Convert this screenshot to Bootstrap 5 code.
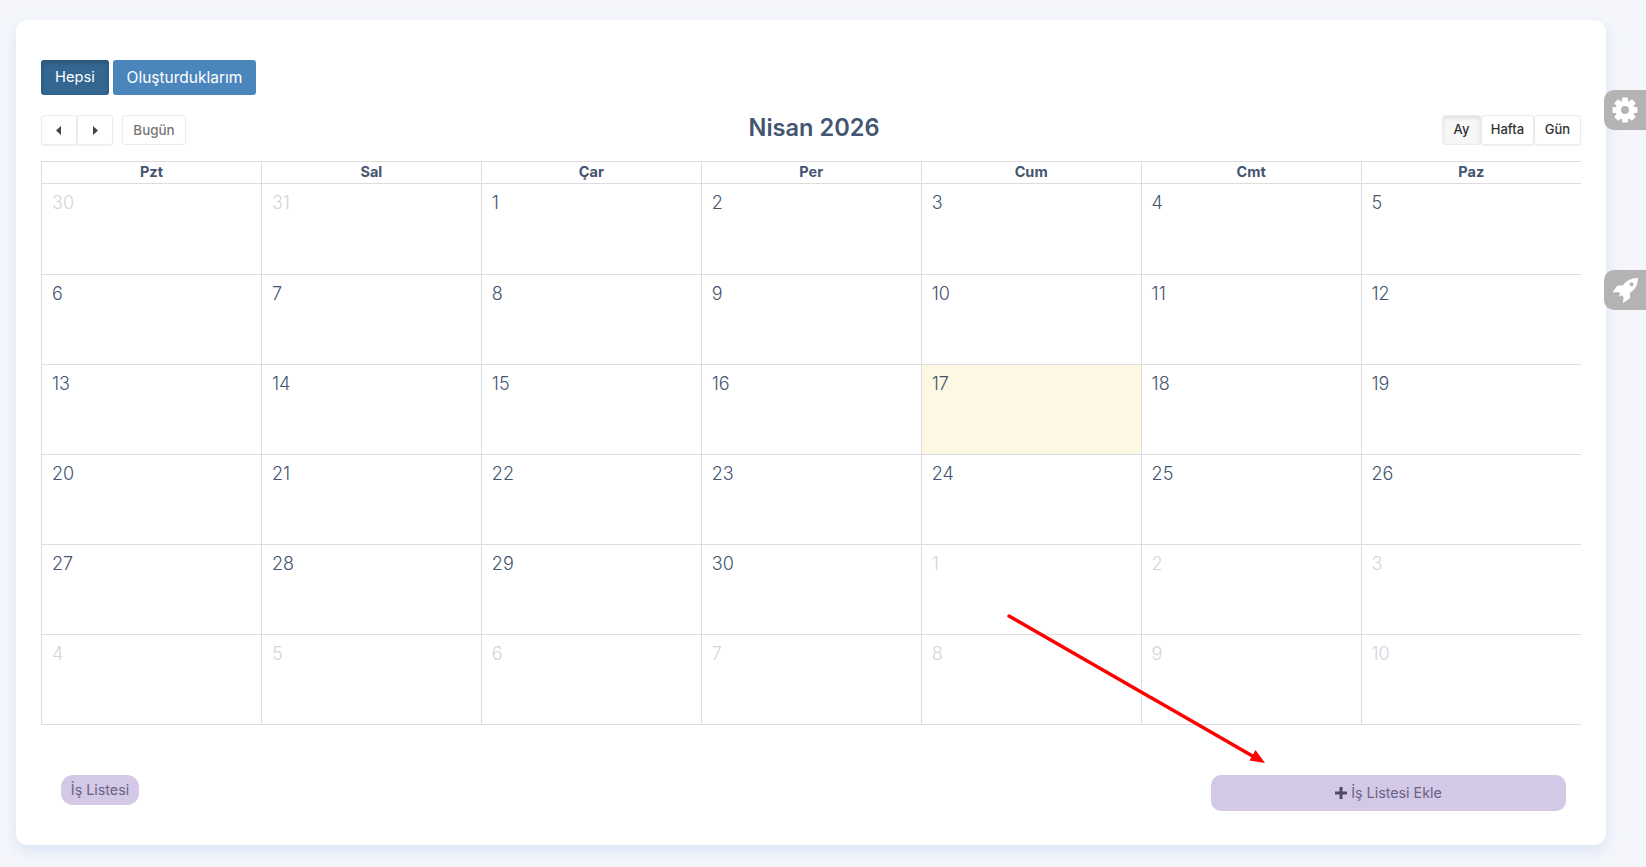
<!DOCTYPE html>
<html lang="tr">
<head>
  <meta charset="UTF-8" />
  <meta name="viewport" content="width=device-width, initial-scale=1.0"/>
  <title>Takvim</title>
  <link href="https://cdn.jsdelivr.net/npm/bootstrap@5.3.3/dist/css/bootstrap.min.css" rel="stylesheet" />
  <style>
    body {
      background: #f4f6fb;
      font-family: "Inter", "Liberation Sans", sans-serif;
      color: #435570;
      height: 867px;
      overflow: hidden;
    }

    .page-panel {
      position: relative;
      margin: 20px 40px 0 16px;
      height: 825px;
      padding: 40px 25px 0;
      background: #fff;
      border-radius: 12px;
      box-shadow: 0 6px 14px rgba(180, 200, 235, .4);
    }

    .btn-hepsi, .btn-mine {
      height: 35px;
      padding: 0;
      line-height: 33px;
      color: #fff;
      border: 0;
      border-radius: 3px;
    }

    .btn-hepsi { width: 68px; font-size: 14.700px; background: #336690; box-shadow: inset 0 2px 5px rgba(0, 0, 0, .2); }
    .btn-mine { width: 143px; font-size: 15.500px; background: #4a86bb; margin-left: 4px; }
    .btn-hepsi:hover { background: #336690; color: #fff; }
    .btn-mine:hover { background: #4a86bb; color: #fff; }

    .cal-toolbar { margin-top: 20px; margin-bottom: 16px; height: 30px; }

    .cal-btn {
      height: 30px;
      padding: 0;
      font-size: 13px;
      font-weight: 500;
      color: #333;
      background: #fff;
      border: 1px solid #ececec;
      border-radius: 3px;
      box-shadow: 0 1px 2px rgba(0, 0, 0, .06);
    }

    .cal-nav { width: 36px; display: inline-flex; align-items: center; justify-content: center; }
    .cal-today { width: 64px; margin-left: 9px; font-size: 13.400px; color: #777; box-shadow: none; }
    .cal-ay { width: 39px; background: #f7f7f7; box-shadow: inset 0 2px 4px rgba(0, 0, 0, .1); }
    .cal-hafta { width: 53px; }
    .cal-gun { width: 47px; }

    .cal-title { font-size: 23.600px; font-weight: 600; margin: -1px 0 0; color: #435570; }

    .cal-table { table-layout: fixed; width: 1540px; margin: 0; border-collapse: collapse; }
    .cal-table th, .cal-table td { border: 1px solid #ddd; padding: 0; color: #435570; }
    .cal-table tr > :last-child { border-right: 0; }
    .cal-table th { height: 21.500px; font-size: 14.500px; font-weight: 700; text-align: center; line-height: 20px; }
    .cal-table td { height: 90px; vertical-align: top; padding: 8px 10px 0; font-size: 18px; font-weight: 300; line-height: 22px; }
    .cal-table tbody tr:first-child td { height: 91px; }
    .cal-table td.other { color: #d2d5da; }
    .cal-table td.today { background: #fdf8e3; }

    .cal-footer { margin-top: 50px; }

    .btn-liste, .btn-ekle {
      padding: 0;
      font-size: 14.300px;
      color: #6a6285;
      background: #d3c8e6;
      border: 0;
    }

    .btn-liste { width: 78px; height: 30px; margin-left: 20px; border-radius: 12px; }
    .btn-ekle { width: 355px; height: 36px; margin-right: 15px; border-radius: 10px; }
    .btn-liste:hover, .btn-ekle:hover { background: #d3c8e6; color: #6a6285; }

    .plus-icon { width: 12px; height: 12px; vertical-align: -1px; margin-right: 4px; fill: #4e4a68; }

    .side-tab {
      position: fixed;
      right: 0;
      width: 42px;
      height: 40px;
      background: #b3b3b3;
      border-radius: 10px 0 0 10px;
    }

    .side-tab svg { width: 26px; height: 26px; fill: #fff; }
    .tab-gear { top: 90px; }
    .tab-rocket { top: 270px; }

    .red-arrow { position: fixed; left: 0; top: 0; width: 1646px; height: 867px; pointer-events: none; }
  </style>
</head>
<body>
  <div class="page-panel">
    <div class="d-flex">
      <button class="btn btn-hepsi" type="button">Hepsi</button>
      <button class="btn btn-mine" type="button">Oluşturduklarım</button>
    </div>

    <!-- Calendar toolbar -->
    <div class="cal-toolbar d-flex justify-content-between align-items-start">
      <div class="d-flex">
        <button class="btn cal-btn cal-nav" type="button" aria-label="Önceki">
          <svg width="6" height="9" viewBox="0 0 6 9"><path d="M5 0v9L0 4.500z" fill="#444"/></svg>
        </button>
        <button class="btn cal-btn cal-nav" type="button" aria-label="Sonraki">
          <svg width="6" height="9" viewBox="0 0 6 9"><path d="M1 0v9l5-4.500z" fill="#444"/></svg>
        </button>
        <button class="btn cal-btn cal-today" type="button">Bugün</button>
      </div>
      <h2 class="cal-title">Nisan 2026</h2>
      <div class="d-flex">
        <button class="btn cal-btn cal-ay" type="button">Ay</button>
        <button class="btn cal-btn cal-hafta" type="button">Hafta</button>
        <button class="btn cal-btn cal-gun" type="button">Gün</button>
      </div>
    </div>

    <table class="cal-table">
      <thead>
        <tr><th>Pzt</th><th>Sal</th><th>Çar</th><th>Per</th><th>Cum</th><th>Cmt</th><th>Paz</th></tr>
      </thead>
      <tbody id="calBody"></tbody>
    </table>

    <div class="cal-footer d-flex justify-content-between align-items-start">
      <button class="btn btn-liste" type="button">İş Listesi</button>
      <button class="btn btn-ekle" type="button">
        <svg class="plus-icon" viewBox="0 0 12 12"><path d="M4.500 0h3v4.500H12v3H7.500V12h-3V7.500H0v-3h4.500z"/></svg>İş Listesi Ekle
      </button>
    </div>
  </div>

  <div class="side-tab tab-gear d-flex align-items-center justify-content-center">
    <svg viewBox="0 0 26 26">
      <circle cx="13" cy="13" r="9.500"/>
      <rect x="10" y="0.500" width="6" height="25" rx="1"/>
      <rect x="10" y="0.500" width="6" height="25" rx="1" transform="rotate(45 13 13)"/>
      <rect x="10" y="0.500" width="6" height="25" rx="1" transform="rotate(90 13 13)"/>
      <rect x="10" y="0.500" width="6" height="25" rx="1" transform="rotate(135 13 13)"/>
      <circle cx="13" cy="13" r="4" fill="#b3b3b3"/>
    </svg>
  </div>
  <div class="side-tab tab-rocket d-flex align-items-center justify-content-center">
    <svg viewBox="0 0 26 26">
      <path fill-rule="evenodd" d="M26 1C20 1 14.500 3 11 8.500H6.500C5.500 8.500 4.800 9 4.300 10L.500 15.500l6-.500 1.800 2-1.500 1.500 1.200 1.200 1.500-1.500 2 1.800-.500 6 5.500-3.800c1-.500 1.500-1.200 1.500-2.200V16c5.500-3.500 8-9 8-15zM19.500 5.200a2 2 0 1 1 0 4 2 2 0 0 1 0-4z"/>
    </svg>
  </div>

  <!-- Red annotation arrow -->
  <svg class="red-arrow" viewBox="0 0 1646 867">
    <line x1="1009" y1="616" x2="1256" y2="758" stroke="#f00" stroke-width="3.500" stroke-linecap="round"/>
    <path d="M1265 763l-15.500-2.500 6-10.500z" fill="#f00"/>
  </svg>

  <script src="https://cdn.jsdelivr.net/npm/bootstrap@5.3.3/dist/js/bootstrap.bundle.min.js"></script>
  <script>
    // Nisan 2026 grid: 6 weeks from Monday 30 March
    const body = document.getElementById('calBody');
    const prevDays = [30, 31];
    const cells = [];
    prevDays.forEach(d => cells.push({ d, other: true }));
    for (let d = 1; d <= 30; d++) cells.push({ d, other: false });
    for (let d = 1; cells.length < 42; d++) cells.push({ d, other: true });

    let html = '';
    cells.forEach((c, i) => {
      if (i % 7 === 0) html += '<tr>';
      const cls = c.other ? 'other' : (c.d === 17 ? 'today' : '');
      html += `<td class="${cls}">${c.d}</td>`;
      if (i % 7 === 6) html += '</tr>';
    });
    body.innerHTML = html;
  </script>
</body>
</html>
